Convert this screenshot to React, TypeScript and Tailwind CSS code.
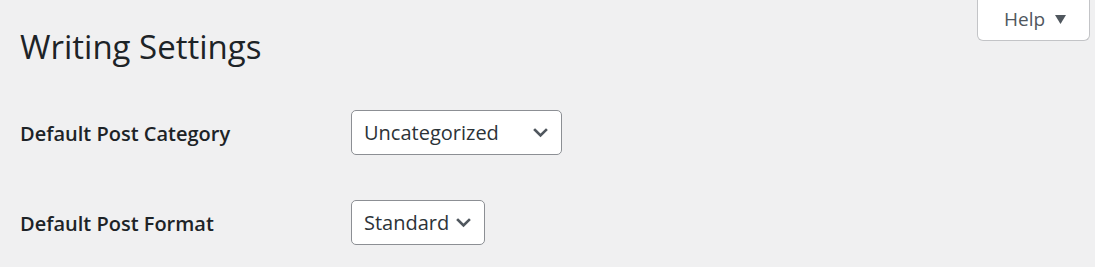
import React from "react";

function Chevron() {
  return (
    <svg width="15" height="10" viewBox="0 0 15 10" className="shrink-0">
      <polyline points="2,2 7.5,7.5 13,2" fill="none" stroke="#50575e" strokeWidth="2.6" strokeLinecap="square" />
    </svg>
  );
}

function Select({ value, width }: { value: string; width: string }) {
  return (
    <div
      className={`flex items-center justify-between h-[45px] ${width} pl-[12px] pr-[13px] bg-white border border-[#8c8f94] rounded-[5px] text-[20px] text-[#2c3338]`}
    >
      <span>{value}</span>
      <Chevron />
    </div>
  );
}

export default function App() {
  return (
    <div
      className="min-h-screen w-full bg-[#f0f0f1] relative"
      style={{ fontFamily: '"Open Sans", "Noto Sans", sans-serif' }}
    >
      <div className="absolute top-0 right-[5px]">
        <div className="flex items-center gap-[10px] w-[113px] h-[42px] pl-[26px] bg-white border border-t-0 border-[#c3c4c7] rounded-b-[6px] text-[19px] text-[#50575e] -mt-px">
          <span>Help</span>
          <svg width="11" height="9" viewBox="0 0 11 9">
            <polygon points="0,0 11,0 5.5,9" fill="#50575e" />
          </svg>
        </div>
      </div>
      <div className="pl-[20px] pt-[24px]">
        <h1 className="text-[33px] leading-[46px] font-normal text-[#1d2327]">Writing Settings</h1>
        <div className="mt-[40px] flex items-center">
          <div className="w-[331px] pt-[3px] text-[20px] font-semibold text-[#1d2327]">Default Post Category</div>
          <Select value="Uncategorized" width="w-[211px]" />
        </div>
        <div className="mt-[45px] flex items-center">
          <div className="w-[331px] pt-[3px] text-[20px] font-semibold text-[#1d2327]">Default Post Format</div>
          <Select value="Standard" width="w-[134px]" />
        </div>
      </div>
    </div>
  );
}
